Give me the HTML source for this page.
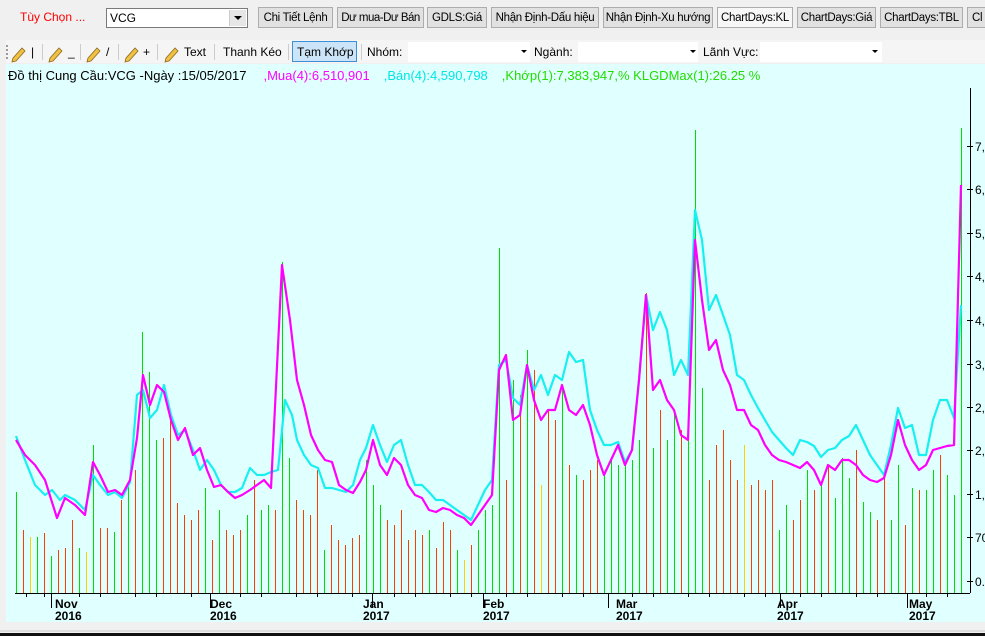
<!DOCTYPE html>
<html><head><meta charset="utf-8"><style>
body{margin:0;width:985px;height:636px;overflow:hidden;background:#f0f0f0;font-family:"Liberation Sans",sans-serif;font-size:12px;position:relative}
.a{position:absolute;white-space:nowrap}
.btn{position:absolute;top:7px;height:21px;border:1px solid #adadad;background:#e1e1e1;font-size:11.5px;line-height:21px;text-align:center;box-sizing:border-box;letter-spacing:-0.3px;overflow:hidden}
.tb{position:absolute;top:40px;height:23px;left:6px;width:979px;background:#f5f5f5}
.t2{position:absolute;top:45px;font-size:12px;line-height:14px}
.sep{position:absolute;top:44px;width:1px;height:16px;background:#ccc}
.inp{position:absolute;top:42px;height:20px;background:#fff}
</style></head><body>
<div class="a" style="left:20px;top:10px;color:#f00;font-size:12px">Tùy Chọn ...</div>
<div class="a" style="left:106px;top:8px;width:142px;height:20px;border:1px solid #7a7a7a;background:#fff;box-sizing:border-box"><span style="position:absolute;left:3px;top:2px;font-size:12px">VCG</span><div style="position:absolute;right:1px;top:1px;width:16px;height:16px;background:#e6e6e6;border-left:1px solid #ccc"><div style="position:absolute;left:4px;top:6px;border:4px solid transparent;border-top:4px solid #000;border-bottom:0"></div></div></div>
<div class="btn" style="left:258px;width:75px">Chi Tiết Lệnh</div>
<div class="btn" style="left:337px;width:87px;letter-spacing:-0.5px">Dư mua-Dư Bán</div>
<div class="btn" style="left:427px;width:60px">GDLS:Giá</div>
<div class="btn" style="left:491px;width:108px">Nhận Định-Dấu hiệu</div>
<div class="btn" style="left:603px;width:110px">Nhận Định-Xu hướng</div>
<div class="btn" style="left:717px;width:76px;background:#f7f7f7">ChartDays:KL</div>
<div class="btn" style="left:797px;width:79px">ChartDays:Giá</div>
<div class="btn" style="left:880px;width:83px">ChartDays:TBL</div>
<div class="btn" style="left:967px;width:30px;text-align:left;padding-left:4px">Cl</div>
<div class="tb"></div>
<div class="a" style="left:6px;top:45px;width:2px;height:14px;border-left:2px dotted #999"></div>
<svg class="a" style="left:0;top:40px" width="360" height="24">
<g fill="#f0c040" stroke="#8a6a20" stroke-width="0.8">
<path d="M13 18 L22 8 L25 11 L16 21 L12 22 Z"/><path d="M50 18 L59 8 L62 11 L53 21 L49 22 Z"/><path d="M88 18 L97 8 L100 11 L91 21 L87 22 Z"/><path d="M126 18 L135 8 L138 11 L129 21 L125 22 Z"/><path d="M166 18 L175 8 L178 11 L169 21 L165 22 Z"/></g></svg>
<div class="t2" style="left:31px">|</div><div class="sep" style="left:42px"></div>
<div class="t2" style="left:68px">_</div><div class="sep" style="left:80px"></div>
<div class="t2" style="left:106px">/</div><div class="sep" style="left:118px"></div>
<div class="t2" style="left:143px">+</div><div class="sep" style="left:157px"></div>
<div class="t2" style="left:184px">Text</div><div class="sep" style="left:214px"></div>
<div class="t2" style="left:223px">Thanh Kéo</div><div class="sep" style="left:288px"></div>
<div class="a" style="left:292px;top:41px;width:65px;height:21px;background:#cce4f7;border:1px solid #3d8fd6;box-sizing:border-box"></div>
<div class="t2" style="left:297px">Tạm Khớp</div><div class="sep" style="left:361px"></div>
<div class="t2" style="left:367px">Nhóm:</div>
<div class="inp" style="left:408px;width:122px"></div><div class="a" style="left:521px;top:50px;border:3px solid transparent;border-top:3px solid #000"></div>
<div class="t2" style="left:534px">Ngành:</div>
<div class="inp" style="left:578px;width:120px"></div><div class="a" style="left:690px;top:50px;border:3px solid transparent;border-top:3px solid #000"></div>
<div class="t2" style="left:703px">Lãnh Vực:</div>
<div class="inp" style="left:760px;width:122px"></div><div class="a" style="left:872px;top:50px;border:3px solid transparent;border-top:3px solid #000"></div>
<div class="a" style="left:6px;top:64px;width:979px;height:558px;background:#e0ffff"></div>
<div class="a" style="left:8px;top:68px;font-size:13px"><span>Đồ thị Cung Cầu:VCG -Ngày :15/05/2017</span><span style="color:#ff00ff;margin-left:17px">,Mua(4):6,510,901</span><span style="color:#00e6e6;margin-left:14px">,Bán(4):4,590,798</span><span style="color:#22dd00;margin-left:14px">,Khớp(1):7,383,947,% KLGDMax(1):26.25 %</span></div>
<svg class="a" style="left:0;top:0" width="985" height="636">
<g stroke-width="1" fill="none" shape-rendering="crispEdges" transform="translate(0.5,0)">
<path stroke="#00dd00" d="M16 593V492M37 593V537M51 593V556M79 593V548M93 593V445M114 593V532M128 593V482M142 593V332M149 593V372M156 593V440M205 593V488M219 593V510M247 593V515M261 593V510M268 593V505M282 593V262M289 593V458M324 593V550M366 593V460M373 593V485M380 593V505M429 593V530M457 593V550M478 593V530M485 593V510M492 593V505M499 593V248M513 593V380M527 593V350M562 593V385M576 593V475M604 593V475M611 593V460M618 593V465M625 593V465M632 593V460M639 593V440M653 593V448M667 593V440M674 593V410M688 593V440M695 593V130M702 593V388M779 593V530M786 593V505M807 593V470M821 593V482M835 593V498M842 593V458M849 593V478M863 593V502M870 593V512M891 593V520M898 593V465M912 593V488M926 593V490M933 593V470M947 593V475M954 593V495M961 593V128"/>
<path stroke="#ff3c00" d="M23 593V530M44 593V533M58 593V550M65 593V548M72 593V520M100 593V528M107 593V528M121 593V500M135 593V470M163 593V438M170 593V420M177 593V503M184 593V515M191 593V520M198 593V510M212 593V540M226 593V530M233 593V535M240 593V530M254 593V480M275 593V510M296 593V500M303 593V510M310 593V515M317 593V470M331 593V525M338 593V540M345 593V545M352 593V538M359 593V535M387 593V520M394 593V525M401 593V510M408 593V540M415 593V530M422 593V535M436 593V548M443 593V522M450 593V530M471 593V545M506 593V480M520 593V395M534 593V370M548 593V410M555 593V420M569 593V465M583 593V480M590 593V470M597 593V460M646 593V293M660 593V410M681 593V430M709 593V480M716 593V445M723 593V430M730 593V460M737 593V480M751 593V485M758 593V480M765 593V490M772 593V480M793 593V520M800 593V500M814 593V490M828 593V465M856 593V450M877 593V520M884 593V470M905 593V525M919 593V490M940 593V455"/>
<path stroke="#ffd000" d="M30 593V537M86 593V552M464 593V560M541 593V485M744 593V445"/>
</g>
<polyline fill="none" stroke="#18f0f0" stroke-width="2.2" stroke-linejoin="round" points="16,436 25,460 35,485 45,495 52,490 60,500 65,495 75,500 85,510 93,475 100,485 108,495 115,492 122,498 130,482 137,395 143,390 150,418 157,410 164,385 171,415 178,435 185,430 193,450 200,470 207,460 214,470 221,485 228,492 235,492 242,488 250,468 257,475 264,475 271,472 278,470 285,400 292,415 297,440 304,455 311,465 318,468 325,488 332,488 339,490 346,492 353,485 360,460 366,448 373,425 380,445 387,462 394,445 401,440 408,465 415,485 422,485 429,492 436,500 443,500 450,505 457,510 464,515 471,520 478,505 485,490 492,480 499,365 506,360 513,398 520,405 527,365 534,390 541,375 548,395 555,375 562,380 569,352 576,362 583,360 590,410 597,430 604,445 611,445 618,442 625,462 632,450 639,380 646,295 653,330 660,312 667,330 674,375 681,360 688,375 695,210 702,240 709,310 716,295 723,315 730,335 737,375 744,380 751,395 758,408 765,420 772,432 779,440 786,448 793,455 800,440 807,442 814,446 821,457 828,450 835,448 842,440 849,436 856,425 863,440 870,455 877,465 884,475 891,445 898,408 905,428 912,425 919,455 926,455 933,420 940,400 947,400 954,418 961,305"/>
<polyline fill="none" stroke="#ff00ff" stroke-width="2.2" stroke-linejoin="round" points="16,440 25,455 35,465 45,480 57,518 65,498 75,505 85,515 93,462 100,475 108,492 115,490 122,495 130,480 137,438 143,375 150,405 157,385 164,392 171,420 178,440 185,428 193,455 200,448 207,470 214,487 221,485 228,492 235,498 242,495 250,490 257,485 264,480 271,488 282,265 290,320 297,380 304,405 311,435 318,450 325,460 332,462 339,485 346,490 353,493 360,482 366,470 373,440 380,465 387,475 394,458 401,465 408,485 415,495 422,498 429,510 436,512 443,508 450,510 457,515 464,518 471,525 478,515 485,505 492,495 499,370 506,355 513,420 520,415 527,365 534,400 541,420 548,410 555,410 562,385 569,410 576,415 583,405 590,425 597,455 604,475 611,460 618,445 625,465 632,450 639,380 646,295 653,390 660,380 667,400 674,410 681,435 688,440 695,240 702,300 709,350 716,340 723,370 730,385 737,410 744,410 751,425 758,430 765,445 772,455 779,460 786,462 793,465 800,468 807,462 814,470 821,485 828,465 835,470 842,460 849,460 856,465 863,475 870,480 877,482 884,478 891,455 898,420 905,445 912,460 919,470 926,465 933,450 940,448 947,446 954,445 961,185"/>
<g stroke="#000" stroke-width="1" fill="none">
<path d="M15 593.5H970M970.5 88V593"/>
<path d="M967 146.5h6M967 189.5h6M967 233.5h6M967 276.5h6M967 320.5h6M967 364.5h6M967 407.5h6M967 450.5h6M967 494.5h6M967 537.5h6M967 581.5h6"/>
<path d="M51.5 593v15M210.5 593v15M372.5 593v15M483.5 593v15M608.5 593v15M780.5 593v15M907.5 593v15"/>
<path d="M26.5 593v4M44.5 593v4M79.5 593v4M100.5 593v4M135.5 593v4M156.5 593v4M191.5 593v4M240.5 593v4M261.5 593v4M296.5 593v4M317.5 593v4M352.5 593v4M394.5 593v4M415.5 593v4M450.5 593v4M471.5 593v4M506.5 593v4M527.5 593v4M562.5 593v4M583.5 593v4M632.5 593v4M653.5 593v4M688.5 593v4M709.5 593v4M744.5 593v4M765.5 593v4M800.5 593v4M821.5 593v4M856.5 593v4M877.5 593v4M926.5 593v4M947.5 593v4"/>
</g>
<g font-family="Liberation Sans,sans-serif" font-size="12" fill="#000">
<text x="975" y="151">7,</text><text x="975" y="194">6,</text><text x="975" y="238">5,</text><text x="975" y="281">4,</text><text x="975" y="325">4,</text><text x="975" y="369">3,</text><text x="975" y="412">2,</text><text x="975" y="455">2,</text><text x="975" y="499">1,</text><text x="975" y="542">70</text><text x="975" y="586">0.</text>
</g>
<g font-family="Liberation Sans,sans-serif" font-size="12" fill="#000" font-weight="bold">
<text x="55" y="608">Nov</text><text x="55" y="620">2016</text>
<text x="210" y="608">Dec</text><text x="210" y="620">2016</text>
<text x="363" y="608">Jan</text><text x="363" y="620">2017</text>
<text x="483" y="608">Feb</text><text x="483" y="620">2017</text>
<text x="616" y="608">Mar</text><text x="616" y="620">2017</text>
<text x="777" y="608">Apr</text><text x="777" y="620">2017</text>
<text x="909" y="608">May</text><text x="909" y="620">2017</text>
</g>
<rect x="0" y="630" width="985" height="2" fill="#ddd"/><rect x="0" y="633" width="985" height="3" fill="#111"/>
</svg>
</body></html>
